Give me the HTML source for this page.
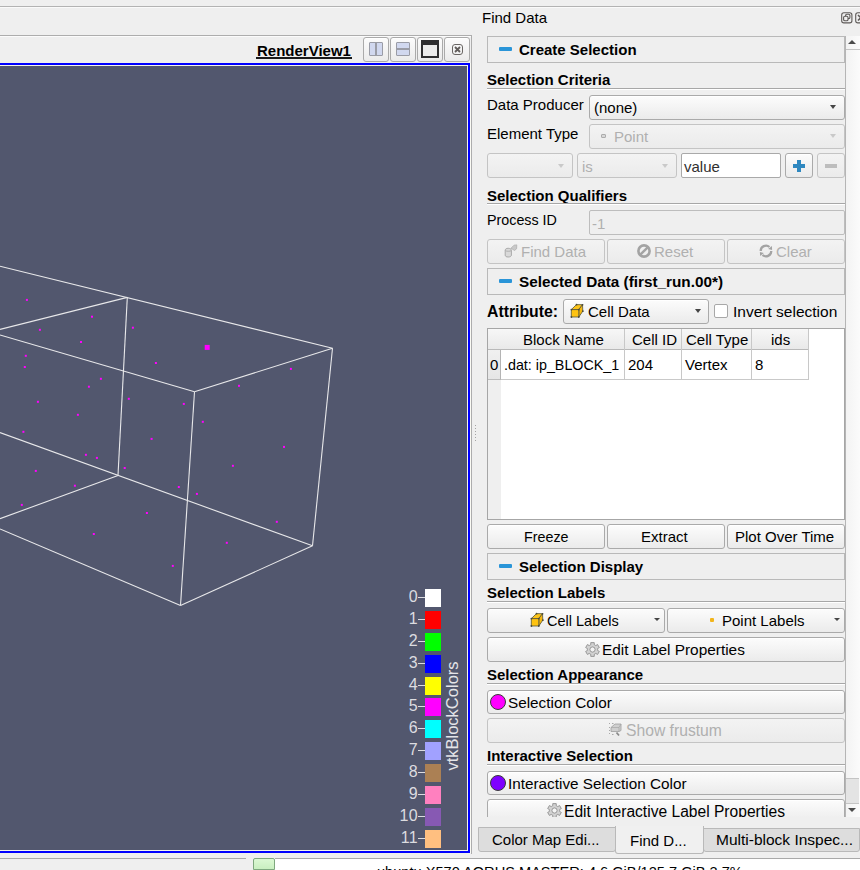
<!DOCTYPE html>
<html><head><meta charset="utf-8">
<style>
*{box-sizing:border-box;margin:0;padding:0}
html,body{width:860px;height:870px;overflow:hidden;background:#efefef;font-family:"Liberation Sans",sans-serif;color:#000}
.a{position:absolute}
.t{position:absolute;font-size:15px;line-height:18px;white-space:nowrap}
.b{font-weight:bold}
.hl{position:absolute;height:1px;background:#a9a9a9}
.btn{position:absolute;border:1px solid #aaaaaa;border-radius:3px;background:linear-gradient(#fcfcfc,#ebebeb);box-shadow:inset 0 1px 0 #fff}
.dis{background:linear-gradient(#f3f3f3,#ebebeb);border-color:#c4c4c4;box-shadow:none}
.hdr{position:absolute;left:487px;width:358px;height:27px;border:1px solid #b9b9b9;background:#efefef}
.minus{position:absolute;left:11px;width:13px;height:4px;background:#3a92c8;border-radius:1px}
.gray{color:#b0b0b0}
.arr{position:absolute;width:0;height:0;border-left:3.75px solid transparent;border-right:3.75px solid transparent;border-top:4.2px solid #454545}
.arrd{border-top-color:#c9c9c9}
.sep{position:absolute;left:487px;width:358px;height:2px;border-top:1px solid #a7a7a7;border-bottom:1px solid #fff}
</style></head><body>

<!-- top lines -->
<div class="a" style="left:0;top:6px;width:860px;height:1px;background:#b3b3b3"></div>
<div class="a" style="left:0;top:7px;width:860px;height:1px;background:#fafafa"></div>

<!-- ====== LEFT RENDER VIEW FRAME ====== -->
<div class="a" style="left:0;top:35px;width:472px;height:1px;background:#adadad"></div>
<div class="a" style="left:0;top:36px;width:471px;height:1px;background:#fbfbfb"></div>
<div class="a" style="left:471px;top:35px;width:1px;height:819px;background:#adadad"></div>

<div class="t b" style="left:257px;top:42px;font-size:15px">RenderView1</div>
<div class="a" style="left:256px;top:57px;width:96px;height:2px;background:#1a1a1a"></div>

<!-- view buttons -->
<div class="btn" style="left:363px;top:37px;width:26px;height:25px"></div>
<div class="btn" style="left:390px;top:37px;width:26px;height:25px"></div>
<div class="btn" style="left:417px;top:37px;width:26px;height:25px"></div>
<div class="btn" style="left:444px;top:37px;width:26px;height:25px"></div>
<div class="a" style="left:369px;top:42px;width:14px;height:14px;border:1px solid #9a9ca6;border-radius:1px;background:#d1d8ef"></div>
<div class="a" style="left:375px;top:42px;width:2px;height:14px;background:#9a9ca6"></div>
<div class="a" style="left:396px;top:42px;width:14px;height:14px;border:1px solid #9a9ca6;border-radius:1px;background:#d1d8ef"></div>
<div class="a" style="left:396px;top:48px;width:14px;height:2px;background:#9a9ca6"></div>
<div class="a" style="left:421px;top:40px;width:18px;height:18px;border:2px solid #2e2e30;border-top-width:5px;background:#ececec"></div>
<svg class="a" style="left:452px;top:44px" width="11" height="11" viewBox="0 0 11 11"><rect x="0.5" y="0.5" width="10" height="10" rx="2.5" fill="none" stroke="#6a6664" stroke-width="1"/><path d="M3 3L8 8M8 3L3 8" stroke="#605c5a" stroke-width="1.8"/></svg>


<!-- blue border & view -->
<div class="a" style="left:0;top:63px;width:470px;height:790px;background:#0000ff"></div>
<div class="a" style="left:0;top:65px;width:468px;height:786px;background:#f4f4ea"></div>
<div class="a" style="left:0;top:66px;width:467px;height:784px;background:#52576e;overflow:hidden" id="view"></div>
<div class="a" style="left:0;top:0;width:467px;height:850px;overflow:hidden"><svg class="a" style="left:0;top:0" width="467" height="850" viewBox="0 0 467 850"><g stroke="#e8e8ea" stroke-width="1.1" fill="none"><line x1="0" y1="266.3" x2="332.5" y2="348.3"/><line x1="0" y1="329.4" x2="127.3" y2="297.4"/><line x1="0" y1="335" x2="194.5" y2="391.8"/><line x1="332.5" y1="348.3" x2="194.5" y2="391.8"/><line x1="127.3" y1="297.4" x2="118" y2="475.4"/><line x1="194.5" y1="391.8" x2="180.5" y2="605.5"/><line x1="332.5" y1="348.3" x2="312.5" y2="545.8"/><line x1="0" y1="432.6" x2="312.5" y2="545.8"/><line x1="0" y1="518.7" x2="118" y2="475.4"/><line x1="0" y1="528.9" x2="180.5" y2="605.5"/><line x1="312.5" y1="545.8" x2="180.5" y2="605.5"/></g><g fill="#ff00ff"><rect x="25.9" y="298.9" width="2" height="2"/><rect x="91.0" y="315.7" width="2" height="2"/><rect x="38.9" y="328.8" width="2" height="2"/><rect x="80.0" y="341.0" width="2" height="2"/><rect x="131.9" y="326.7" width="2" height="2"/><rect x="24.8" y="354.8" width="2" height="2"/><rect x="23.8" y="366.0" width="2" height="2"/><rect x="154.9" y="362.0" width="2" height="2"/><rect x="99.9" y="377.8" width="2" height="2"/><rect x="87.9" y="385.7" width="2" height="2"/><rect x="127.8" y="397.8" width="2" height="2"/><rect x="36.9" y="400.8" width="2" height="2"/><rect x="76.9" y="413.8" width="2" height="2"/><rect x="289.9" y="367.9" width="2" height="2"/><rect x="238.0" y="384.8" width="2" height="2"/><rect x="182.8" y="402.9" width="2" height="2"/><rect x="201.8" y="420.8" width="2" height="2"/><rect x="283.0" y="445.9" width="2" height="2"/><rect x="22.4" y="430.8" width="2" height="2"/><rect x="84.9" y="453.8" width="2" height="2"/><rect x="95.9" y="456.9" width="2" height="2"/><rect x="150.6" y="437.9" width="2" height="2"/><rect x="123.7" y="467.0" width="2" height="2"/><rect x="34.8" y="469.9" width="2" height="2"/><rect x="73.9" y="484.7" width="2" height="2"/><rect x="20.8" y="503.9" width="2" height="2"/><rect x="145.9" y="512.0" width="2" height="2"/><rect x="92.8" y="533.0" width="2" height="2"/><rect x="171.8" y="564.9" width="2" height="2"/><rect x="231.9" y="464.8" width="2" height="2"/><rect x="177.8" y="486.0" width="2" height="2"/><rect x="195.9" y="492.9" width="2" height="2"/><rect x="275.8" y="520.8" width="2" height="2"/><rect x="225.8" y="541.8" width="2" height="2"/><rect x="204.7" y="344.9" width="5" height="5"/></g></svg><div class="a" style="left:425px;top:589px;width:16px;height:18px;background:#ffffff"></div><div class="a" style="left:418px;top:597px;width:7px;height:1px;background:#dcdce0"></div><div class="a" style="left:361px;top:587px;width:57px;text-align:right;font-size:16px;line-height:20px;color:#dcdce0;letter-spacing:0.3px">0</div><div class="a" style="left:425px;top:611px;width:16px;height:18px;background:#ff0000"></div><div class="a" style="left:418px;top:619px;width:7px;height:1px;background:#dcdce0"></div><div class="a" style="left:361px;top:609px;width:57px;text-align:right;font-size:16px;line-height:20px;color:#dcdce0;letter-spacing:0.3px">1</div><div class="a" style="left:425px;top:633px;width:16px;height:18px;background:#00ff00"></div><div class="a" style="left:418px;top:641px;width:7px;height:1px;background:#dcdce0"></div><div class="a" style="left:361px;top:631px;width:57px;text-align:right;font-size:16px;line-height:20px;color:#dcdce0;letter-spacing:0.3px">2</div><div class="a" style="left:425px;top:655px;width:16px;height:18px;background:#0000ff"></div><div class="a" style="left:418px;top:663px;width:7px;height:1px;background:#dcdce0"></div><div class="a" style="left:361px;top:653px;width:57px;text-align:right;font-size:16px;line-height:20px;color:#dcdce0;letter-spacing:0.3px">3</div><div class="a" style="left:425px;top:677px;width:16px;height:18px;background:#ffff00"></div><div class="a" style="left:418px;top:685px;width:7px;height:1px;background:#dcdce0"></div><div class="a" style="left:361px;top:675px;width:57px;text-align:right;font-size:16px;line-height:20px;color:#dcdce0;letter-spacing:0.3px">4</div><div class="a" style="left:425px;top:698px;width:16px;height:18px;background:#ff00ff"></div><div class="a" style="left:418px;top:706px;width:7px;height:1px;background:#dcdce0"></div><div class="a" style="left:361px;top:696px;width:57px;text-align:right;font-size:16px;line-height:20px;color:#dcdce0;letter-spacing:0.3px">5</div><div class="a" style="left:425px;top:720px;width:16px;height:18px;background:#00ffff"></div><div class="a" style="left:418px;top:728px;width:7px;height:1px;background:#dcdce0"></div><div class="a" style="left:361px;top:718px;width:57px;text-align:right;font-size:16px;line-height:20px;color:#dcdce0;letter-spacing:0.3px">6</div><div class="a" style="left:425px;top:742px;width:16px;height:18px;background:#a1a1ff"></div><div class="a" style="left:418px;top:750px;width:7px;height:1px;background:#dcdce0"></div><div class="a" style="left:361px;top:740px;width:57px;text-align:right;font-size:16px;line-height:20px;color:#dcdce0;letter-spacing:0.3px">7</div><div class="a" style="left:425px;top:764px;width:16px;height:18px;background:#ab8054"></div><div class="a" style="left:418px;top:772px;width:7px;height:1px;background:#dcdce0"></div><div class="a" style="left:361px;top:762px;width:57px;text-align:right;font-size:16px;line-height:20px;color:#dcdce0;letter-spacing:0.3px">8</div><div class="a" style="left:425px;top:786px;width:16px;height:18px;background:#ff80bf"></div><div class="a" style="left:418px;top:794px;width:7px;height:1px;background:#dcdce0"></div><div class="a" style="left:361px;top:784px;width:57px;text-align:right;font-size:16px;line-height:20px;color:#dcdce0;letter-spacing:0.3px">9</div><div class="a" style="left:425px;top:808px;width:16px;height:18px;background:#8759b3"></div><div class="a" style="left:418px;top:816px;width:7px;height:1px;background:#dcdce0"></div><div class="a" style="left:361px;top:806px;width:57px;text-align:right;font-size:16px;line-height:20px;color:#dcdce0;letter-spacing:0.3px">10</div><div class="a" style="left:425px;top:830px;width:16px;height:18px;background:#ffbf80"></div><div class="a" style="left:418px;top:838px;width:7px;height:1px;background:#dcdce0"></div><div class="a" style="left:361px;top:828px;width:57px;text-align:right;font-size:16px;line-height:20px;color:#dcdce0;letter-spacing:0.3px">11</div><div class="a" style="left:452px;top:716px;width:0;height:0"><div style="position:absolute;left:0;top:0;transform:translate(-50%,-50%) rotate(-90deg);font-size:16.5px;line-height:20px;color:#e4e4e8;white-space:nowrap">vtkBlockColors</div></div></div>

<!-- status bar -->
<div class="a" style="left:0;top:858px;width:246px;height:12px;border-top:1px solid #a9a9a9;background:#efefef"></div>
<div class="a" style="left:253px;top:858px;width:22px;height:12px;border:1px solid #7fa87f;border-radius:2px 2px 0 0;background:linear-gradient(#dcf8d4,#c9efc0)"></div>
<div class="a" style="left:275px;top:858px;width:585px;height:12px;border-top:1px solid #a9a9a9;background:#fff"></div>
<div class="t" style="left:377px;top:863px;font-size:14.6px">ubuntu X570 AORUS MASTER: 4.6 GiB/125.7 GiB 3.7%</div>

<!-- ====== RIGHT PANEL ====== -->
<div class="a" style="left:475px;top:425px;width:1px;height:1px;background:#a4a4a4"></div><div class="a" style="left:475px;top:428px;width:1px;height:1px;background:#a4a4a4"></div><div class="a" style="left:475px;top:431px;width:1px;height:1px;background:#a4a4a4"></div><div class="a" style="left:475px;top:434px;width:1px;height:1px;background:#a4a4a4"></div><div class="a" style="left:475px;top:437px;width:1px;height:1px;background:#a4a4a4"></div><div class="a" style="left:475px;top:440px;width:1px;height:1px;background:#a4a4a4"></div><div class="a" style="left:470px;top:63px;width:1px;height:790px;background:#fbfbf4"></div>
<div class="t" style="left:482px;top:9px">Find Data</div>


<!-- dock title buttons -->
<svg class="a" style="left:841px;top:12px" width="12" height="12" viewBox="0 0 12 12"><rect x="0.7" y="0.7" width="10.2" height="10.2" rx="2.2" fill="none" stroke="#5e5a58" stroke-width="1.1"/><rect x="4.6" y="2.3" width="4.3" height="4.3" rx="1.2" fill="none" stroke="#5e5a58" stroke-width="1.1"/><rect x="2.6" y="4.3" width="4.4" height="4.4" rx="1.3" fill="#efefef" stroke="#5e5a58" stroke-width="1.1"/></svg>
<svg class="a" style="left:855px;top:12px" width="12" height="12" viewBox="0 0 12 12"><rect x="0.7" y="0.7" width="10.2" height="10.2" rx="2.2" fill="none" stroke="#5e5a58" stroke-width="1.1"/><path d="M3 3L8.5 8.5M8.5 3L3 8.5" stroke="#5e5a58" stroke-width="1.6"/></svg>

<!-- Create Selection header -->
<div class="hdr" style="top:36px"></div>
<div class="a" style="left:499px;top:47px;width:13px;height:4px;background:#2a95d8;border-radius:1px"></div>
<div class="t b" style="left:519px;top:41px">Create Selection</div>

<div class="t b" style="left:487px;top:71px">Selection Criteria</div>
<div class="sep" style="top:88px"></div>

<div class="t" style="left:487px;top:96px">Data Producer</div>
<div class="btn" style="left:589px;top:95px;width:256px;height:25px"></div>
<div class="t" style="left:594px;top:99px">(none)</div>
<div class="arr" style="left:830px;top:105px"></div>

<div class="t" style="left:487px;top:125px">Element Type</div>
<div class="btn dis" style="left:589px;top:124px;width:256px;height:25px"></div>
<div class="a" style="left:601px;top:133.5px;width:4.6px;height:4.6px;border:1.2px solid #acacac;border-radius:1px;background:#d8d8d8"></div>
<div class="t gray" style="left:614px;top:128px">Point</div>
<div class="arr arrd" style="left:830px;top:134px"></div>

<div class="btn dis" style="left:487px;top:153px;width:86px;height:25px"></div>
<div class="arr arrd" style="left:558px;top:164px"></div>
<div class="btn dis" style="left:577px;top:153px;width:100px;height:25px"></div>
<div class="t gray" style="left:582px;top:158px">is</div>
<div class="arr arrd" style="left:662px;top:164px"></div>
<div class="a" style="left:681px;top:153px;width:100px;height:25px;border:1px solid #a9a9a9;border-radius:2px;background:#fff"></div>
<div class="t" style="left:684px;top:158px;color:#303030">value</div>
<div class="btn" style="left:785px;top:153px;width:28px;height:25px"></div>
<div class="a" style="left:793px;top:164px;width:12px;height:4px;background:#2f88c0"></div>
<div class="a" style="left:797px;top:160px;width:4px;height:12px;background:#2f88c0"></div>
<div class="btn dis" style="left:817px;top:153px;width:28px;height:25px"></div>
<div class="a" style="left:825px;top:164px;width:12px;height:4px;background:#bdbdbd"></div>

<div class="t b" style="left:487px;top:187px">Selection Qualifiers</div>
<div class="sep" style="top:203px"></div>

<div class="t" style="left:487px;top:211px;font-size:14.3px">Process ID</div>
<div class="a" style="left:589px;top:210px;width:256px;height:25px;border:1px solid #bdbdbd;border-radius:2px;background:#efefef"></div>
<div class="t gray" style="left:592px;top:215px">-1</div>

<div class="btn dis" style="left:487px;top:239px;width:118px;height:25px"></div>
<div class="t gray" style="left:521px;top:243px">Find Data</div>
<div class="btn dis" style="left:607px;top:239px;width:118px;height:25px"></div>
<div class="t gray" style="left:654px;top:243px">Reset</div>
<div class="btn dis" style="left:727px;top:239px;width:118px;height:25px"></div>
<div class="t gray" style="left:776px;top:243px">Clear</div>
<svg class="a" style="left:503px;top:244px" width="16" height="15" viewBox="0 0 16 15"><path d="M2.2 6.2C2.2 4.9 3.6 4.3 5.2 4.3S8.4 4.9 8.4 6.2V11.2C8.4 12.4 7 13 5.2 13S2.2 12.4 2.2 11.2Z" fill="#d9d9d9" stroke="#a9a9a9" stroke-width="1"/><path d="M2.4 6.6C3.2 7.5 7.4 7.5 8.2 6.6" fill="none" stroke="#a9a9a9" stroke-width="0.9"/><path d="M8 4.2L11 1.2L13.8 0.9L13.6 4.8L11.5 6.5Z" fill="#c9c9c9" stroke="#b0b0b0" stroke-width="0.8"/></svg>
<svg class="a" style="left:637px;top:244px" width="15" height="15" viewBox="0 0 15 15"><circle cx="7" cy="7" r="5.6" fill="none" stroke="#a3a3a3" stroke-width="2.6"/><path d="M3.3 10.7L10.7 3.3" stroke="#a3a3a3" stroke-width="2.4"/></svg>
<svg class="a" style="left:759px;top:244px" width="15" height="15" viewBox="0 0 15 15"><path d="M1.7 7A5.3 5.3 0 0 1 10.5 3" fill="none" stroke="#a3a3a3" stroke-width="2.3"/><path d="M12.3 7A5.3 5.3 0 0 1 3.5 11" fill="none" stroke="#a3a3a3" stroke-width="2.3"/><path d="M12.9 1.9L9.2 5.1L13.1 6Z" fill="#a3a3a3"/><path d="M1.1 12.1L4.8 8.9L0.9 8Z" fill="#a3a3a3"/></svg>



<!-- Selected Data header -->
<div class="hdr" style="top:268px"></div>
<div class="a" style="left:499px;top:279px;width:13px;height:4px;background:#2a95d8;border-radius:1px"></div>
<div class="t b" style="left:519px;top:273px;font-size:15.3px">Selected Data (first_run.00*)</div>

<div class="t b" style="left:487px;top:303px;font-size:15.8px">Attribute:</div>
<div class="btn" style="left:563px;top:299px;width:146px;height:25px"></div>
<div class="t" style="left:588px;top:303px">Cell Data</div>
<div class="arr" style="left:695px;top:309px"></div>
<div class="a" style="left:714px;top:304px;width:14px;height:14px;border:1px solid #a8a8a8;border-radius:2px;background:#fff"></div>
<div class="t" style="left:733px;top:303px;font-size:15.5px">Invert selection</div>

<!-- table -->
<div class="a" style="left:487px;top:328px;width:358px;height:192px;border:1px solid #a6a6a6;background:#fff"></div>
<div class="a" style="left:488px;top:329px;width:13px;height:190px;background:#efefef"></div>
<div class="a" style="left:488px;top:329px;width:321px;height:21px;background:linear-gradient(#f7f7f7,#e9e9e9);border-bottom:1px solid #b9b9b9"></div>
<div class="a" style="left:488px;top:350px;width:13px;height:30px;background:linear-gradient(#f0f0f0,#e6e6e6);border-right:1px solid #b4b4b4;border-bottom:1px solid #bdbdbd"></div>
<div class="a" style="left:501px;top:379px;width:308px;height:1px;background:#c9c9c9"></div>
<div class="a" style="left:624px;top:329px;width:1px;height:51px;background:#c8c8c8"></div>
<div class="a" style="left:681px;top:329px;width:1px;height:51px;background:#c8c8c8"></div>
<div class="a" style="left:751px;top:329px;width:1px;height:51px;background:#c8c8c8"></div>
<div class="a" style="left:808px;top:329px;width:1px;height:51px;background:#c8c8c8"></div>
<div class="t" style="left:523px;top:331px">Block Name</div>
<div class="t" style="left:632px;top:331px">Cell ID</div>
<div class="t" style="left:686px;top:331px">Cell Type</div>
<div class="t" style="left:771px;top:331px">ids</div>
<div class="t" style="left:490px;top:356px">0</div>
<div class="t" style="left:504px;top:356px;font-size:14.3px">.dat: ip_BLOCK_1</div>
<div class="t" style="left:628px;top:356px">204</div>
<div class="t" style="left:685px;top:356px">Vertex</div>
<div class="t" style="left:755px;top:356px">8</div>

<!-- scrollbar -->
<div class="a" style="left:845px;top:36px;width:15px;height:781px;background:linear-gradient(90deg,#f3f3f3,#fbfbfb);border-left:1px solid #b5b5b5"></div>
<div class="a" style="left:846px;top:49px;width:14px;height:1px;background:#c4c4c4"></div>
<div class="a" style="left:848px;top:40px;width:0;height:0;border-left:4px solid transparent;border-right:4px solid transparent;border-bottom:4px solid #4a4a4a"></div>
<div class="a" style="left:846px;top:778px;width:13px;height:26px;background:#e4e4e4;border-top:1px solid #c4c4c4;border-bottom:1px solid #c4c4c4"></div>
<div class="a" style="left:848px;top:808px;width:0;height:0;border-left:4px solid transparent;border-right:4px solid transparent;border-top:4px solid #4a4a4a"></div>

<!-- buttons -->
<div class="btn" style="left:487px;top:524px;width:118px;height:25px"></div>
<div class="t" style="left:524px;top:528px;font-size:14.3px">Freeze</div>
<div class="btn" style="left:607px;top:524px;width:118px;height:25px"></div>
<div class="t" style="left:641px;top:528px">Extract</div>
<div class="btn" style="left:727px;top:524px;width:118px;height:25px"></div>
<div class="t" style="left:735px;top:528px">Plot Over Time</div>

<div class="hdr" style="top:553px"></div>
<div class="a" style="left:499px;top:564px;width:13px;height:4px;background:#2a95d8;border-radius:1px"></div>
<div class="t b" style="left:519px;top:558px">Selection Display</div>

<div class="t b" style="left:487px;top:584px">Selection Labels</div>
<div class="sep" style="top:601px"></div>
<div class="btn" style="left:487px;top:608px;width:178px;height:25px"></div>
<div class="t" style="left:547px;top:612px;font-size:14.5px">Cell Labels</div>
<div class="arr" style="left:654px;top:618px;border-left-width:3px;border-right-width:3px;border-top-width:3.3px"></div>
<div class="btn" style="left:667px;top:608px;width:178px;height:25px"></div>
<div class="a" style="left:710px;top:618px;width:4px;height:4px;background:#f2b51c;border-radius:1px"></div>
<div class="t" style="left:722px;top:612px">Point Labels</div>
<div class="arr" style="left:834px;top:618px;border-left-width:3px;border-right-width:3px;border-top-width:3.3px"></div>

<div class="btn" style="left:487px;top:637px;width:358px;height:25px"></div>
<svg class="a" style="left:569px;top:303px" width="15" height="15" viewBox="0 0 15 15"><g stroke="#55553a" stroke-width="0.8" stroke-linejoin="round"><path d="M2.3 6.6L7.5 1.6L13.5 1.7L9.8 6.6Z" fill="#fcc419"/><path d="M9.8 6.6L13.5 1.7L13.8 8.2L9.8 14Z" fill="#f6b80e"/><rect x="2.3" y="6.6" width="7.5" height="7.4" fill="#fec311"/></g><g fill="#4a4a3a"><circle cx="2.4" cy="6.6" r="0.9"/><circle cx="7.5" cy="1.7" r="0.9"/><circle cx="13.5" cy="1.8" r="0.9"/><circle cx="9.8" cy="6.6" r="0.9"/><circle cx="2.4" cy="14" r="0.9"/><circle cx="9.8" cy="14" r="0.9"/><circle cx="13.8" cy="8.2" r="0.9"/></g></svg><svg class="a" style="left:529px;top:612px" width="15" height="15" viewBox="0 0 15 15"><g stroke="#55553a" stroke-width="0.8" stroke-linejoin="round"><path d="M2.3 6.6L7.5 1.6L13.5 1.7L9.8 6.6Z" fill="#fcc419"/><path d="M9.8 6.6L13.5 1.7L13.8 8.2L9.8 14Z" fill="#f6b80e"/><rect x="2.3" y="6.6" width="7.5" height="7.4" fill="#fec311"/></g><g fill="#4a4a3a"><circle cx="2.4" cy="6.6" r="0.9"/><circle cx="7.5" cy="1.7" r="0.9"/><circle cx="13.5" cy="1.8" r="0.9"/><circle cx="9.8" cy="6.6" r="0.9"/><circle cx="2.4" cy="14" r="0.9"/><circle cx="9.8" cy="14" r="0.9"/><circle cx="13.8" cy="8.2" r="0.9"/></g></svg><svg class="a" style="left:585px;top:641.5px" width="15" height="15" viewBox="0 0 15 15"><path d="M4.95 3.08 L5.75 2.71 L5.75 0.62 L9.25 0.62 L9.25 2.71 L10.05 3.08 L10.77 3.59 L12.58 2.54 L14.33 5.58 L12.52 6.62 L12.60 7.50 L12.52 8.38 L14.33 9.42 L12.58 12.46 L10.77 11.41 L10.05 11.92 L9.25 12.29 L9.25 14.38 L5.75 14.38 L5.75 12.29 L4.95 11.92 L4.23 11.41 L2.42 12.46 L0.67 9.42 L2.48 8.38 L2.40 7.50 L2.48 6.62 L0.67 5.58 L2.42 2.54 L4.23 3.59Z M10.1 7.5A2.6 2.6 0 1 0 4.9 7.5A2.6 2.6 0 1 0 10.1 7.5Z" fill="#d2d2d2" fill-rule="evenodd" stroke="#8f8f8f" stroke-width="0.9"/></svg>
<div class="t" style="left:602px;top:641px;font-size:15.4px">Edit Label Properties</div>

<div class="t b" style="left:487px;top:666px">Selection Appearance</div>
<div class="sep" style="top:683px"></div>
<div class="btn" style="left:487px;top:690px;width:358px;height:24px"></div>
<div class="a" style="left:490px;top:694px;width:16px;height:16px;border:1px solid #3a3a3a;border-radius:50%;background:#ff00ff"></div>
<div class="t" style="left:508px;top:694px;font-size:15.3px">Selection Color</div>
<div class="btn dis" style="left:487px;top:718px;width:358px;height:25px"></div>
<div class="t gray" style="left:626px;top:722px;font-size:15.7px">Show frustum</div>
<svg class="a" style="left:608px;top:722px" width="16" height="16" viewBox="0 0 16 16"><g fill="#a8a8a8"><rect x="1" y="1" width="1" height="1"/><rect x="1" y="5" width="1" height="1"/><rect x="1" y="8" width="1" height="1"/><rect x="1" y="11" width="1" height="1"/><rect x="4" y="1" width="1.5" height="1"/><rect x="4" y="12" width="1.5" height="1"/></g><path d="M3 5.5L7 2L13 2L13 8.5L11 9.5L3 9.5Z" fill="#cfcfcf" stroke="#9e9e9e" stroke-width="0.8"/><path d="M3 5.5L11 5.5L13 2M11 5.5V9.5" fill="none" stroke="#a5a5a5" stroke-width="0.7"/><path d="M8.5 10.5L11 13.5" stroke="#8a8a8a" stroke-width="1.8"/></svg>

<div class="t b" style="left:487px;top:747px">Interactive Selection</div>
<div class="sep" style="top:764px"></div>
<div class="btn" style="left:487px;top:771px;width:358px;height:24px"></div>
<div class="a" style="left:490px;top:775px;width:16px;height:16px;border:1px solid #3a3a3a;border-radius:50%;background:#7f00ff"></div>
<div class="t" style="left:508px;top:775px;font-size:15.3px">Interactive Selection Color</div>
<div class="a" style="left:487px;top:799px;width:358px;height:18px;overflow:hidden">
  <div class="btn" style="left:0;top:0;width:358px;height:25px"></div>
  <svg class="a" style="left:59.5px;top:3.5px" width="15" height="15" viewBox="0 0 15 15"><path d="M4.95 3.08 L5.75 2.71 L5.75 0.62 L9.25 0.62 L9.25 2.71 L10.05 3.08 L10.77 3.59 L12.58 2.54 L14.33 5.58 L12.52 6.62 L12.60 7.50 L12.52 8.38 L14.33 9.42 L12.58 12.46 L10.77 11.41 L10.05 11.92 L9.25 12.29 L9.25 14.38 L5.75 14.38 L5.75 12.29 L4.95 11.92 L4.23 11.41 L2.42 12.46 L0.67 9.42 L2.48 8.38 L2.40 7.50 L2.48 6.62 L0.67 5.58 L2.42 2.54 L4.23 3.59Z M10.1 7.5A2.6 2.6 0 1 0 4.9 7.5A2.6 2.6 0 1 0 10.1 7.5Z" fill="#d2d2d2" fill-rule="evenodd" stroke="#8f8f8f" stroke-width="0.9"/></svg><div class="t" style="left:77px;top:4px;font-size:15.6px">Edit Interactive Label Properties</div>
</div>

<!-- tabs -->
<div class="a" style="left:478px;top:827px;width:138px;height:25px;border:1px solid #b9b9b9;border-top:1px solid #b9b9b9;border-radius:0 0 3px 3px;background:#dddddd"></div>
<div class="t" style="left:492px;top:831px">Color Map Edi...</div>
<div class="a" style="left:703px;top:828px;width:157px;height:24px;border:1px solid #b9b9b9;border-radius:0 0 3px 3px;background:#dddddd"></div>
<div class="t" style="left:716px;top:831px;font-size:15.5px">Multi-block Inspec...</div>
<div class="a" style="left:615px;top:826px;width:89px;height:28px;border:1px solid #b9b9b9;border-top:none;border-radius:0 0 3px 3px;background:#f0f0f0"></div>
<div class="t" style="left:630px;top:832px">Find D...</div>

</body></html>
